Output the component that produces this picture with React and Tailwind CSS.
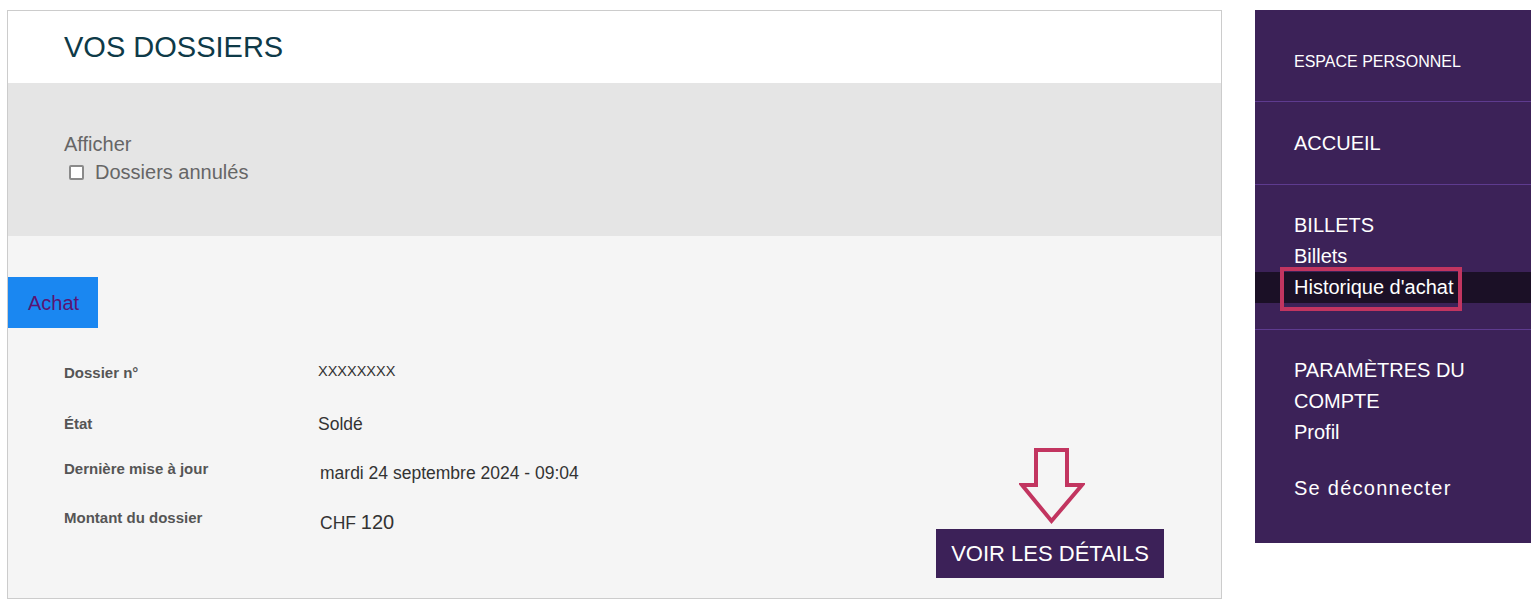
import React from 'react';

function DownArrow() {
  return (
    <svg width="66" height="77" viewBox="0 0 66 77" className="absolute left-[83px] top-[-81px]">
      <polygon
        points="17,2 48,2 48,37 63,37 32.5,73 3,37 17,37"
        fill="none"
        stroke="#c23560"
        strokeWidth="4"
        strokeLinejoin="miter"
      />
    </svg>
  );
}

function DetailRow({ label, children, className = '', labelClass = '', valueClass = '' }) {
  return (
    <div className={`flex items-center h-[30px] ${className}`}>
      <span className={`w-[254px] text-[15px] font-bold text-[#555555] ${labelClass}`}>{label}</span>
      <span className={`text-[#333333] ${valueClass}`}>{children}</span>
    </div>
  );
}

export default function App() {
  return (
    <div className="w-[1538px] h-[607px] bg-white flex items-start font-['Liberation_Sans',Arial,sans-serif]">
      {/* Main panel */}
      <div className="ml-[7px] mt-[10px] w-[1215px] h-[589px] border border-[#cccccc] flex flex-col">
        <div className="h-[72px] bg-white flex items-center pl-[56px]">
          <h1 className="text-[29px] leading-none text-[#0e3a48]">VOS DOSSIERS</h1>
        </div>

        <div className="h-[153px] bg-[#e5e5e5] pl-[56px] pt-[47px] text-[20px] leading-[28px] text-[#666666]">
          <div>Afficher</div>
          <label className="flex items-center">
            <span className="ml-[5px] w-[15px] h-[15px] rounded-[2px] border-2 border-[#8a8a8a] bg-white" />
            <span className="ml-[11px]">Dossiers annulés</span>
          </label>
        </div>

        <div className="flex-1 bg-[#f5f5f5] flex flex-col">
          <div className="mt-[41px] self-start w-[90px] h-[51px] bg-[#1a87f1] flex items-center pl-[20px] text-[20px] text-[#5b1472]">
            Achat
          </div>

          <div className="flex-1 flex items-end justify-between pl-[56px] pr-[57px] pb-[20px]">
            <div className="self-start pt-[29px]">
              <DetailRow label="Dossier n°" labelClass="mt-[3px]" valueClass="mb-[1px] text-[14.5px]">
                XXXXXXXX
              </DetailRow>
              <DetailRow label="État" className="mt-[22px]" valueClass="mt-[1px] text-[17.5px]">
                Soldé
              </DetailRow>
              <DetailRow label="Dernière mise à jour" className="mt-[17px]" labelClass="mb-[4px]" valueClass="mt-[4px] ml-[2px] text-[17.5px]">
                mardi 24 septembre 2024 - 09:04
              </DetailRow>
              <DetailRow label="Montant du dossier" className="mt-[19px]" labelClass="mb-[3px]" valueClass="mt-[3px] ml-[2px]">
                <span className="text-[17.5px]">CHF </span>
                <span className="text-[20px]">120</span>
              </DetailRow>
            </div>

            <div className="relative">
              <DownArrow />
              <button className="w-[228px] h-[49px] bg-[#3c2158] text-white text-[22px] flex items-center justify-center">
                VOIR LES DÉTAILS
              </button>
            </div>
          </div>
        </div>
      </div>

      {/* Sidebar */}
      <div className="ml-[33px] mt-[10px] w-[276px] h-[533px] bg-[#3c2258] text-white flex flex-col">
        <div className="h-[91px] pl-[39px] pt-[40px] text-[16px] leading-[24px]">ESPACE PERSONNEL</div>
        <div className="h-px bg-[#5e3b8f]" />
        <div className="py-[25px] pl-[39px] text-[20px] leading-[32px]">ACCUEIL</div>
        <div className="h-px bg-[#5e3b8f]" />
        <div className="pt-[25px] pb-[26px] text-[20px] leading-[31px]">
          <div className="pl-[39px]">BILLETS</div>
          <div className="pl-[39px]">Billets</div>
          <div className="relative pl-[39px] bg-[#1b1026]">
            Historique d'achat
            <div className="absolute left-[25px] top-[-5px] w-[182px] h-[44px] border-4 border-[#c23560]" />
          </div>
        </div>
        <div className="h-px bg-[#5e3b8f]" />
        <div className="pl-[39px] pt-[25px] text-[20px] leading-[31px]">
          <div>PARAMÈTRES DU</div>
          <div>COMPTE</div>
          <div>Profil</div>
          <div className="mt-[25px] tracking-[1.25px]">Se déconnecter</div>
        </div>
      </div>
    </div>
  );
}
